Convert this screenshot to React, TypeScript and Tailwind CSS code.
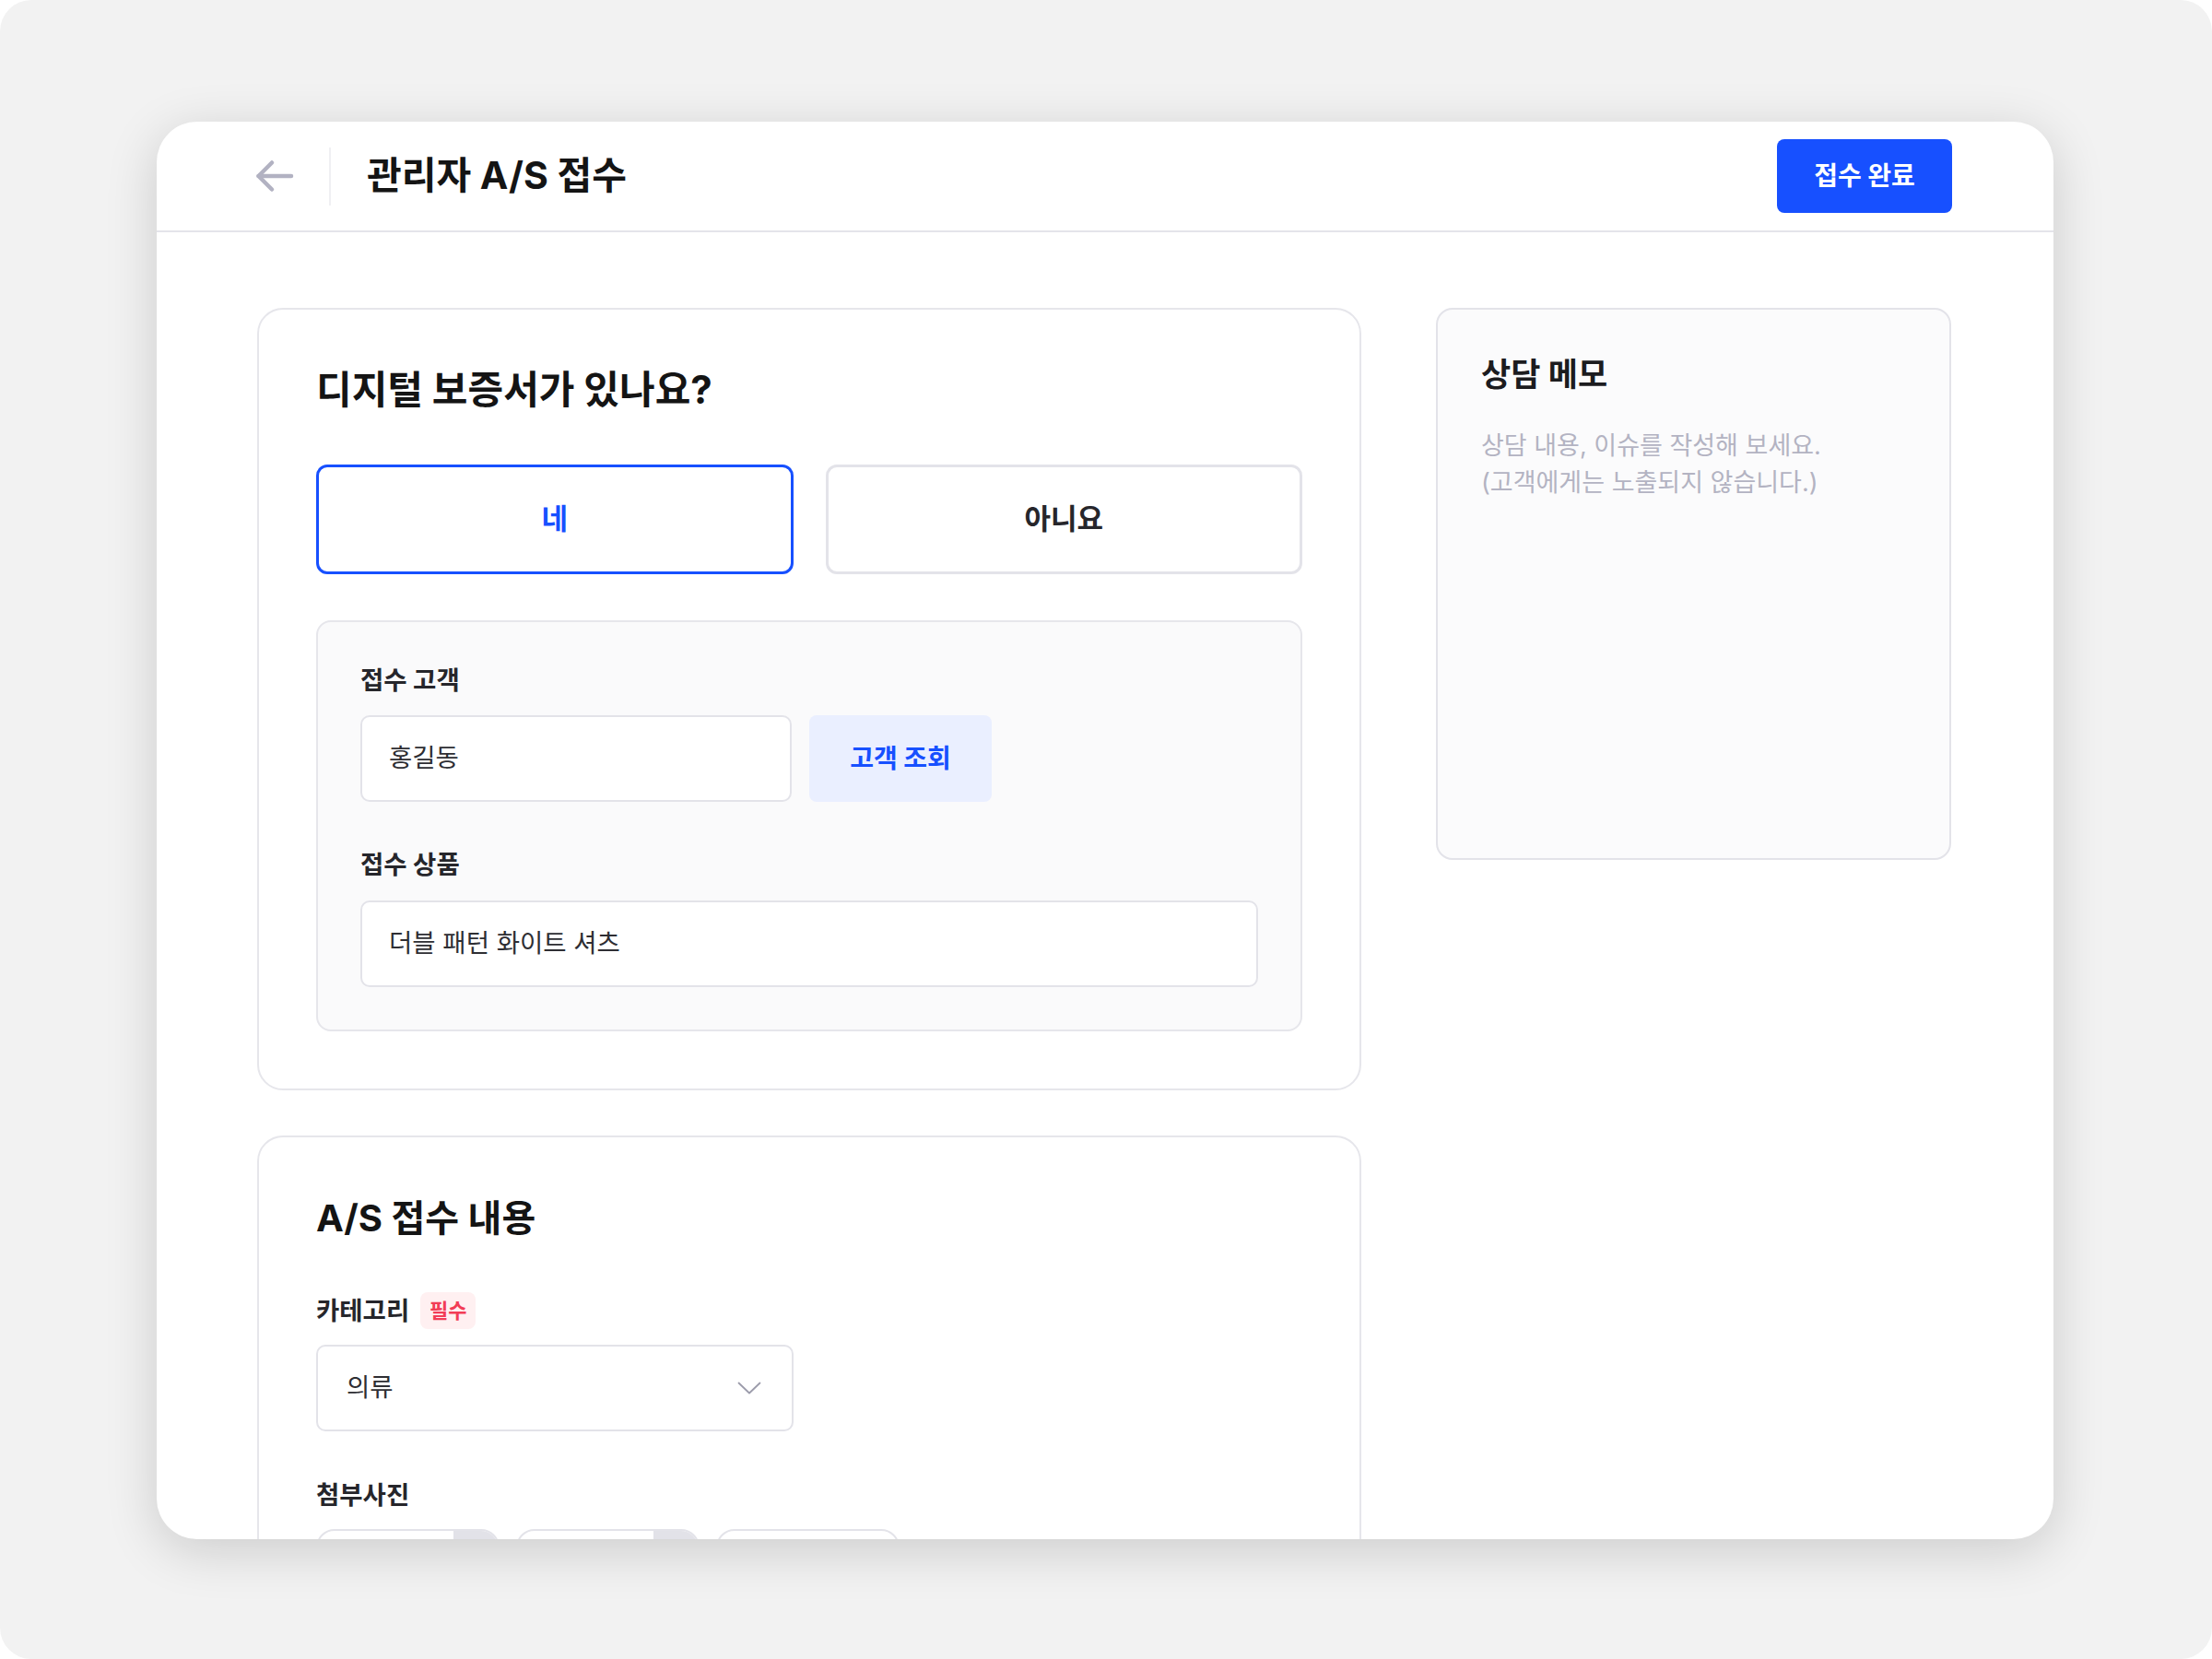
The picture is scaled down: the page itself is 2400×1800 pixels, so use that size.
// admin A/S intake screen, desktop window layout
import { useState } from 'react';

const font = { fontFamily: 'Inter, "Noto Sans CJK KR", "Noto Sans", sans-serif' };

const BackArrow = () => (
    <svg width="42" height="36" viewBox="0 0 42 36" fill="none" stroke="#b2b2c2" strokeWidth="4.5" strokeLinecap="round" strokeLinejoin="round">
        <path d="M18 3.5 3.5 18 18 32.5" />
        <path d="M3.5 18H39" />
    </svg>
);

const ChevronDown = () => (
    <svg width="26" height="14" viewBox="0 0 26 14" fill="none" stroke="#9c9cab" strokeWidth="1.8" strokeLinecap="round" strokeLinejoin="round">
        <path d="M1.5 1.5 13 12.5 24.5 1.5" />
    </svg>
);

function Label({ children }: { children: React.ReactNode }) {
    return <div className="text-[27.5px] leading-[36px] font-bold text-[#26262b]">{children}</div>;
}

function TextBox({ value, className = '' }: { value: string; className?: string }) {
    return (
        <div className={`flex h-[94px] items-center rounded-[10px] border-2 border-[#e3e3e9] bg-white pl-[29px] text-[27.5px] text-[#2e2e33] ${className}`}>
            {value}
        </div>
    );
}

function Thumb({ withTag }: { withTag?: boolean }) {
    return (
        <div className="relative h-[199px] w-[199px] overflow-hidden rounded-[20px] border-2 border-[#e3e3e9] bg-white">
            {withTag && <div className="absolute right-0 top-0 h-[48px] w-[48px] bg-[#e2e2e8]" />}
        </div>
    );
}

export default function App() {
    const [hasWarranty, setHasWarranty] = useState(true);

    return (
        <div className="h-[1800px] w-[2400px] bg-white" style={font}>
            <div className="h-full w-full rounded-[34px] bg-[#f2f2f2] pl-[170px] pt-[132px]">
                <div className="flex h-[1538px] w-[2058px] flex-col overflow-hidden rounded-[44px] bg-white shadow-[0_12px_56px_rgba(0,0,0,0.16)]">
                    {/* top bar */}
                    <header className="flex h-[120px] shrink-0 items-center border-b-2 border-[#e4e4ea] pl-[107px] pr-[110px]">
                        <button className="flex items-center" aria-label="뒤로">
                            <BackArrow />
                        </button>
                        <div className="ml-[38px] h-[63px] w-[2px] bg-[#f0f0f3]" />
                        <h1 className="ml-[39px] text-[41px] font-bold text-[#141414]">관리자 A/S 접수</h1>
                        <button className="ml-auto h-[80px] w-[190px] rounded-[8px] bg-[#1750ff] text-[28px] font-bold text-white">
                            접수 완료
                        </button>
                    </header>

                    <main className="flex gap-[81px] pl-[109px] pr-[111px] pt-[82px]">
                        <div className="flex w-[1198px] flex-col gap-[49px]">
                            {/* warranty question */}
                            <section className="rounded-[28px] border-2 border-[#e6e6eb] bg-white px-[62px] pb-[62px] pt-[59px]">
                                <h2 className="text-[42px] leading-[56px] font-bold text-[#141414]">디지털 보증서가 있나요?</h2>
                                <div className="mt-[53px] grid grid-cols-2 gap-[35px]">
                                    <button
                                        onClick={() => setHasWarranty(true)}
                                        className={`h-[119px] rounded-[12px] border-[3px] text-[31px] font-semibold ${hasWarranty ? 'border-[#1750ff] text-[#1750ff]' : 'border-[#e3e3e9] text-[#26262b]'}`}
                                    >
                                        네
                                    </button>
                                    <button
                                        onClick={() => setHasWarranty(false)}
                                        className={`h-[119px] rounded-[12px] border-[3px] text-[31px] font-semibold ${!hasWarranty ? 'border-[#1750ff] text-[#1750ff]' : 'border-[#e3e3e9] text-[#26262b]'}`}
                                    >
                                        아니요
                                    </button>
                                </div>

                                <div className="mt-[50px] rounded-[16px] border-2 border-[#e6e6eb] bg-[#fafafb] px-[46px] pb-[46px] pt-[45px]">
                                    <Label>접수 고객</Label>
                                    <div className="mt-[20px] flex gap-[19px]">
                                        <TextBox value="홍길동" className="w-[468px]" />
                                        <button className="h-[94px] w-[198px] rounded-[8px] bg-[#eaefff] text-[28px] font-bold text-[#1750ff]">
                                            고객 조회
                                        </button>
                                    </div>
                                    <div className="mt-[50px]">
                                        <Label>접수 상품</Label>
                                    </div>
                                    <TextBox value="더블 패턴 화이트 셔츠" className="mt-[21px] w-full" />
                                </div>
                            </section>

                            {/* A/S details */}
                            <section className="rounded-[28px] border-2 border-[#e6e6eb] bg-white px-[62px] pt-[60px]">
                                <h2 className="text-[40px] leading-[56px] font-bold text-[#141414]">A/S 접수 내용</h2>
                                <div className="mt-[52px] flex h-[40px] items-center gap-[12px]">
                                    <Label>카테고리</Label>
                                    <span className="flex h-[40px] w-[60px] items-center justify-center rounded-[8px] bg-[#fff0f1] text-[22px] font-bold text-[#f23d56]">
                                        필수
                                    </span>
                                </div>
                                <div className="mt-[17px] flex h-[94px] w-[518px] items-center justify-between rounded-[10px] border-2 border-[#e3e3e9] bg-white pl-[31px] pr-[33px] text-[27.5px] text-[#2e2e33]">
                                    <span>의류</span>
                                    <ChevronDown />
                                </div>
                                <div className="mt-[51px]">
                                    <Label>첨부사진</Label>
                                </div>
                                <div className="mt-[19px] flex gap-[18px] pb-[40px]">
                                    <Thumb withTag />
                                    <Thumb withTag />
                                    <Thumb />
                                </div>
                            </section>
                        </div>

                        {/* memo panel */}
                        <aside className="h-[599px] w-[559px] rounded-[18px] border-2 border-[#e3e3e9] bg-[#fbfbfc] px-[47px] pt-[48px]">
                            <h3 className="text-[35px] leading-[44px] font-bold text-[#1c1c1f]">상담 메모</h3>
                            <p className="mt-[36px] text-[27px] leading-[40px] text-[#b3b3c2]">
                                상담 내용, 이슈를 작성해 보세요.
                                <br />
                                (고객에게는 노출되지 않습니다.)
                            </p>
                        </aside>
                    </main>
                </div>
            </div>
        </div>
    );
}
